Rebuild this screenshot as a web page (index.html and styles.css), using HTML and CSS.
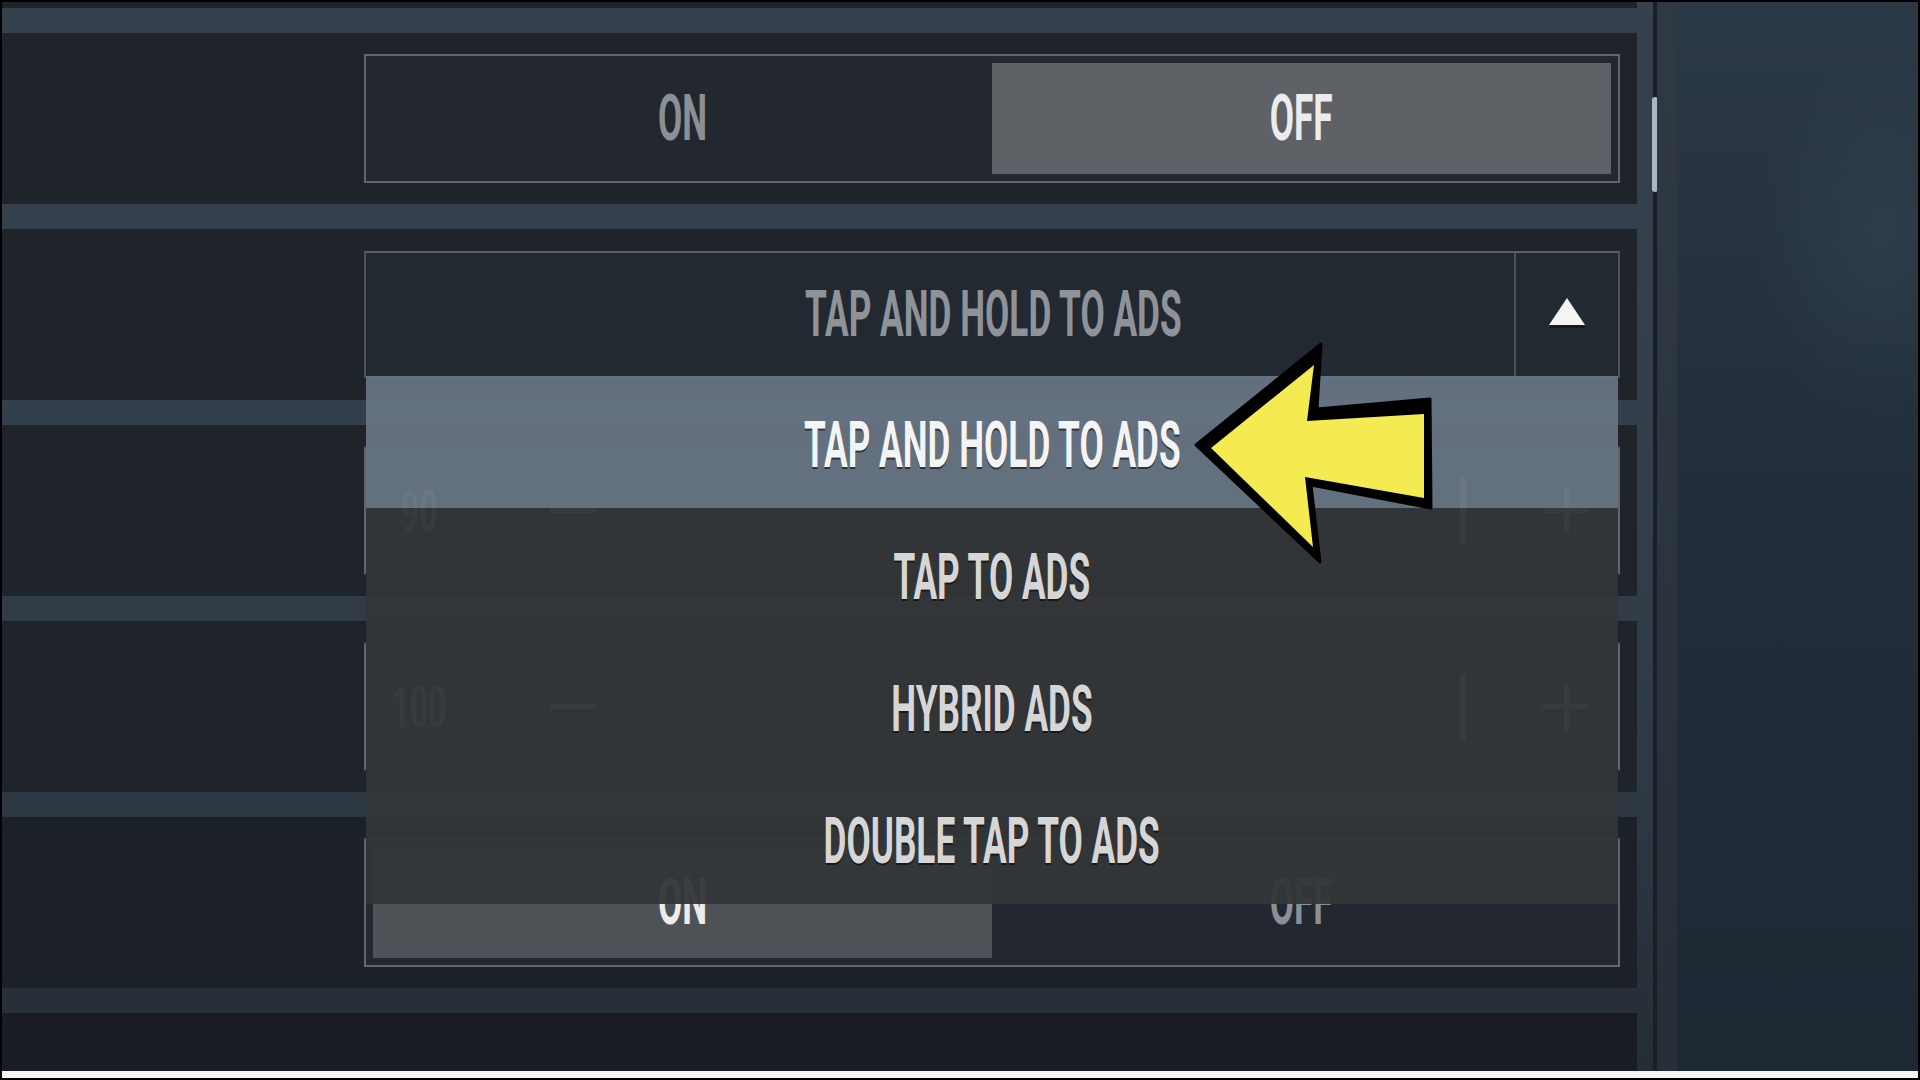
FILE: index.html
```html
<!DOCTYPE html>
<html lang="en">
<head>
<meta charset="utf-8">
<title>Aim Down Sights Settings</title>
<link rel="stylesheet" href="styles.css">
</head>
<body>
<div class="frame">
  <div class="main">
    <div class="panel">
      <div class="row row-partial"></div>

      <div class="row">
        <div class="toggle">
          <div class="opt"><span class="lbl">ON</span></div>
          <div class="opt sel"><span class="lbl">OFF</span></div>
        </div>
      </div>

      <div class="row row-dd">
        <div class="dropdown">
          <div class="dd-value"><span class="lbl">TAP AND HOLD TO ADS</span></div>
          <div class="dd-btn">
            <svg class="tri" width="40" height="32" viewBox="0 0 40 32">
              <polygon points="20,4 38,31 2,31" fill="#0d0f12" opacity="0.6"/>
              <polygon points="20,1 38,28 2,28" fill="#f4f4f4"/>
            </svg>
          </div>
          <ul class="dd-list">
            <li class="dd-item active"><span class="lbl">TAP AND HOLD TO ADS</span></li>
            <li class="dd-item"><span class="lbl">TAP TO ADS</span></li>
            <li class="dd-item"><span class="lbl">HYBRID ADS</span></li>
            <li class="dd-item"><span class="lbl">DOUBLE TAP TO ADS</span></li>
          </ul>
        </div>
      </div>

      <div class="row">
        <div class="slider">
          <div class="s-val"><span class="lbl lbl-sm">90</span></div>
          <div class="s-btn"><span class="minus"></span></div>
          <div class="s-track"><span class="thumb-bar"></span></div>
          <div class="s-btn s-plus"><span class="plus"></span></div>
        </div>
      </div>

      <div class="row">
        <div class="slider">
          <div class="s-val"><span class="lbl lbl-sm">100</span></div>
          <div class="s-btn"><span class="minus"></span></div>
          <div class="s-track"><span class="thumb-bar"></span></div>
          <div class="s-btn s-plus"><span class="plus"></span></div>
        </div>
      </div>

      <div class="row row-dim">
        <div class="toggle">
          <div class="opt sel sel-dim"><span class="lbl">ON</span></div>
          <div class="opt"><span class="lbl">OFF</span></div>
        </div>
      </div>

      <div class="row row-dim2"></div>
    </div>

    <div class="scroll"><div class="scroll-thumb"></div></div>
    <div class="edge"></div>
    <div class="backdrop"></div>
  </div>
  <div class="strip"></div>

  <svg class="arrow" width="260" height="235" viewBox="1185 335 260 235">
    <polygon points="1196,445 1321,344 1317,409 1430,399 1431,508 1311,485 1320,562" fill="#000" stroke="#000" stroke-width="3" stroke-linejoin="round"/>
    <polygon points="1211,448 1314,365 1307,421 1424,414 1424,498 1305,477 1313,547" fill="#f4ea52"/>
  </svg>
</div>
</body>
</html>
```

FILE: styles.css
```css
* { box-sizing: border-box; }

html, body {
  margin: 0;
  padding: 0;
  background: #000;
}

.frame {
  position: relative;
  width: 1920px;
  height: 1080px;
  border: 2px solid #000;
  display: flex;
  flex-direction: column;
  overflow: hidden;
  font-family: Roboto, "Liberation Sans", sans-serif;
}

.main {
  flex: 1;
  display: flex;
  min-height: 0;
}

.strip {
  height: 7px;
  flex-shrink: 0;
  background: #f3f3f3;
}

/* ---------- settings list ---------- */
.panel {
  width: 1651px;
  flex-shrink: 0;
  padding-right: 16px;
  display: flex;
  flex-direction: column;
  gap: 25px;
  overflow: hidden;
  background: linear-gradient(180deg, #35414c 0%, #33404b 40%, #2d3842 75%, #252d36 100%);
}

.row {
  flex-shrink: 0;
  height: 171px;
  background: #1f242b;
  display: flex;
  align-items: center;
  padding-left: 362px;
  padding-right: 17px;
}

.row-partial { height: 6px; }
.row-dim { background: #1c2027; }
.row-dim2 { background: #191d23; }

.lbl {
  display: inline-block;
  font-family: Roboto, "Liberation Sans", sans-serif;
  font-weight: 700;
  font-size: 64px;
  line-height: 1;
  white-space: nowrap;
  transform: scaleX(0.55);
}

.lbl-sm { font-size: 58px; }

/* toggle */
.toggle {
  flex: 1;
  height: 129px;
  border: 2px solid #62666c;
  padding: 7px;
  display: grid;
  grid-template-columns: 1fr 1fr;
  background: #232830;
}

.row-dim .toggle { border-top-color: #3a3f45; }

.opt {
  display: flex;
  align-items: center;
  justify-content: center;
  color: #8b9096;
}

.opt.sel {
  background: #5e6267;
  color: #ececec;
}

.opt.sel-dim { background: #4e5257; }

/* dropdown */
.dropdown {
  flex: 1;
  height: 127px;
  position: relative;
  display: flex;
  border: 2px solid #4d5259;
  border-top-color: #5c6168;
  background: #232931;
}

.dd-value {
  flex: 1;
  display: flex;
  align-items: center;
  justify-content: center;
  padding-left: 106px;
  color: #8e9399;
}

.dd-btn {
  width: 104px;
  border-left: 2px solid #4d5259;
  display: flex;
  align-items: center;
  justify-content: center;
  padding-bottom: 4px;
}

.dd-list {
  position: absolute;
  top: 100%;
  left: 0;
  right: 0;
  margin: 0;
  padding: 0;
  list-style: none;
  z-index: 5;
}

.dd-item {
  height: 132px;
  padding-top: 8px;
  display: flex;
  align-items: center;
  justify-content: center;
  background: rgba(51, 54, 56, 0.95);
  color: #d6d6d6;
  text-shadow: 0 2px 0 rgba(0, 0, 0, 0.55);
}

.dd-item.active {
  background: rgba(103, 116, 131, 0.95);
  color: #f4f4f4;
}

/* slider (mostly hidden under the open list) */
.slider {
  flex: 1;
  height: 129px;
  border: 2px solid #62666c;
  border-top-color: #2a2f35;
  border-bottom-color: #2a2f35;
  display: flex;
  align-items: center;
  background: #20252c;
}

.s-val {
  width: 150px;
  display: flex;
  justify-content: center;
  padding-right: 44px;
  color: #9a9ea3;
}

.s-btn {
  width: 114px;
  height: 100%;
  display: flex;
  align-items: center;
  justify-content: center;
}

.s-track {
  flex: 1;
  height: 100%;
  position: relative;
  display: flex;
  align-items: center;
  justify-content: flex-end;
  padding-right: 48px;
}

.s-plus { width: 104px; }

.minus {
  width: 46px;
  height: 5px;
  background: #9a9ea3;
}

.plus {
  width: 46px;
  height: 46px;
  background:
    linear-gradient(#9a9ea3, #9a9ea3) center / 46px 5px no-repeat,
    linear-gradient(#9a9ea3, #9a9ea3) center / 5px 46px no-repeat;
}

.thumb-bar {
  width: 6px;
  height: 66px;
  background: #a8acb1;
}

/* scrollbar + side */
.scroll {
  width: 4px;
  flex-shrink: 0;
  background: #1a1f26;
  display: flex;
  flex-direction: column;
  align-items: center;
}

.scroll-thumb {
  margin-top: 95px;
  width: 6px;
  height: 95px;
  border-radius: 3px;
  background: #aeb7c1;
  flex-shrink: 0;
}

.edge {
  width: 20px;
  flex-shrink: 0;
  background: linear-gradient(180deg, #2f3944 0%, #2b343e 60%, #262e37 100%);
}

.backdrop {
  flex: 1;
  background:
    radial-gradient(ellipse 180px 260px at 85% 22%, rgba(60, 78, 92, 0.35), transparent 70%),
    linear-gradient(180deg, #2b3845 0%, #26333f 25%, #212c38 55%, #1f2a36 80%, #1e2833 100%);
}

/* annotation arrow */
.arrow {
  position: absolute;
  left: 1183px;
  top: 333px;
  z-index: 10;
}
```
